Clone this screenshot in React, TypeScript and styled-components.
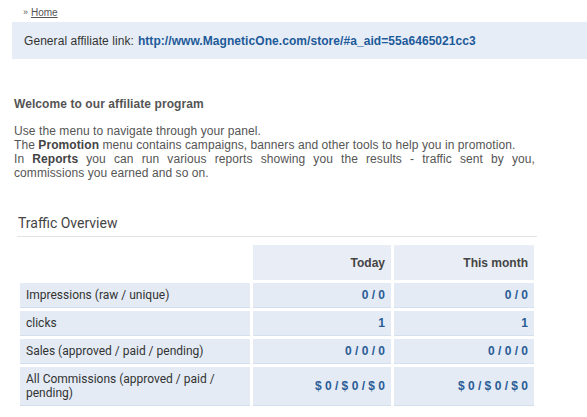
import React from 'react';
import styled, { createGlobalStyle } from 'styled-components';

const GlobalStyle = createGlobalStyle`
  body {
    margin: 0;
    background: #ffffff;
    font-family: "Liberation Sans", Arial, sans-serif;
    font-size: 12px;
    color: #555555;
  }
`;

const Page = styled.div`
  padding: 5px 0 0 12px;
`;

const Breadcrumb = styled.div`
  display: flex;
  align-items: center;
  gap: 4px;
  height: 14px;
  padding-left: 11px;
  font-size: 10px;
  color: #555555;

  span {
    font-size: 9px;
    letter-spacing: -1px;
  }

  a {
    color: #555555;
    text-decoration: underline;
  }
`;

const LinkBox = styled.div`
  display: flex;
  align-items: center;
  height: 37px;
  margin-top: 3px;
  padding: 0 12px;
  background: #e6edf6;
  color: #333333;
  font-size: 12px;
  letter-spacing: 0.06px;

  a {
    margin-left: 4px;
    color: #1d5a99;
    font-weight: bold;
    text-decoration: none;
  }
`;

const Intro = styled.section`
  width: 521px;
  margin: 38px 0 0 2px;
  line-height: 14px;
  letter-spacing: 0.08px;
`;

const Heading = styled.h3`
  margin: 0 0 13px;
  font-size: 12px;
  font-weight: bold;
  color: #555555;
`;

const Text = styled.p`
  margin: 0;
  text-align: justify;

  b {
    color: #444444;
  }
`;

const Overview = styled.section`
  width: 520px;
  margin: 35px 0 0 5px;
`;

const Title = styled.h2`
  margin: 0;
  padding: 0 0 4px 1px;
  font-family: Roboto, "Liberation Sans", sans-serif;
  font-size: 14px;
  font-weight: normal;
  line-height: 17px;
  color: #444444;
  border-bottom: 1px solid #e3e3e3;
`;

const Table = styled.table`
  width: 520px;
  margin-top: 5px;
  border-spacing: 3px;
  border-collapse: separate;
  table-layout: fixed;

  th,
  td {
    box-sizing: border-box;
  }
`;

const HeadCell = styled.th<{ $blank?: boolean }>`
  height: 35px;
  padding: 0 6px;
  background: ${(p) => (p.$blank ? 'transparent' : '#e9eef6')};
  text-align: right;
  font-size: 12px;
  font-weight: bold;
  color: #444444;
`;

const Label = styled.td`
  padding: 5px 6px;
  line-height: 14px;
  background: #e4ebf5;
  border-bottom: 1px solid #d3dfec;
  font-family: Roboto, "Liberation Sans", sans-serif;
  font-size: 12px;
  color: #333333;
`;

const Value = styled(Label)`
  text-align: right;
  font-family: "Liberation Sans", Arial, sans-serif;
  font-weight: bold;
  color: #2a5c95;
`;

const rows = [
  { label: 'Impressions (raw / unique)', today: '0 / 0', month: '0 / 0' },
  { label: 'clicks', today: '1', month: '1' },
  { label: 'Sales (approved / paid / pending)', today: '0 / 0 / 0', month: '0 / 0 / 0' },
  { label: 'All Commissions (approved / paid / pending)', today: '$ 0 / $ 0 / $ 0', month: '$ 0 / $ 0 / $ 0' },
];

const App: React.FC = () => (
  <React.Fragment>
    <GlobalStyle />
    <Page>
      <Breadcrumb>
        <span>››</span>
        <a href="#">Home</a>
      </Breadcrumb>
      <LinkBox>
        General affiliate link:
        <a href="#">http://www.MagneticOne.com/store/#a_aid=55a6465021cc3</a>
      </LinkBox>
      <Intro>
        <Heading>Welcome to our affiliate program</Heading>
        <Text>
          Use the menu to navigate through your panel.
          <br />
          The <b>Promotion</b> menu contains campaigns, banners and other tools to help you in promotion.
          <br />
          In <b>Reports</b> you can run various reports showing you the results - traffic sent by you,
          commissions you earned and so on.
        </Text>
      </Intro>
      <Overview>
        <Title>Traffic Overview</Title>
        <Table>
          <colgroup>
            <col style={{ width: 230 }} />
            <col style={{ width: 138 }} />
            <col />
          </colgroup>
          <thead>
            <tr>
              <HeadCell $blank />
              <HeadCell>Today</HeadCell>
              <HeadCell>This month</HeadCell>
            </tr>
          </thead>
          <tbody>
            {rows.map((r) => (
              <tr key={r.label}>
                <Label>{r.label}</Label>
                <Value>{r.today}</Value>
                <Value>{r.month}</Value>
              </tr>
            ))}
          </tbody>
        </Table>
      </Overview>
    </Page>
  </React.Fragment>
);

export default App;
